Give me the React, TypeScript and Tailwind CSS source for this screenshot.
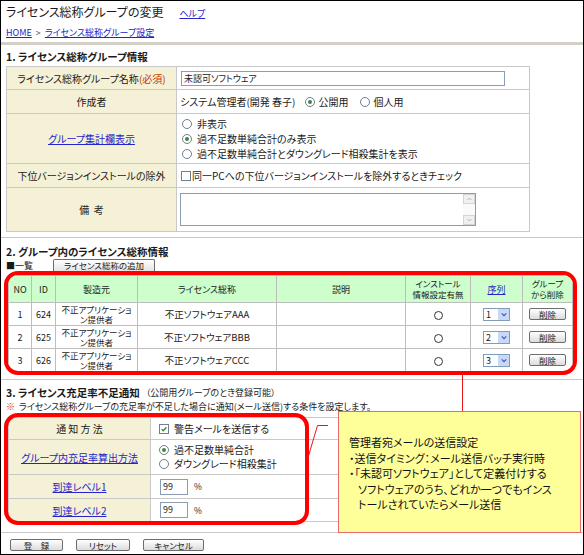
import React from "react";

const Radio = ({ on }: { on?: boolean }) => (
  <span className="inline-flex w-[10px] h-[10px] rounded-full border border-[#6f7f8f] bg-white items-center justify-center shrink-0">
    {on && <span className="w-[4px] h-[4px] rounded-full bg-[#3a8a3a]" />}
  </span>
);

const Check = ({ on }: { on?: boolean }) => (
  <span className="inline-flex w-[10px] h-[10px] border border-[#6f7f8f] bg-white items-center justify-center shrink-0">
    {on && (
      <svg viewBox="0 0 10 10" className="w-[8px] h-[8px]">
        <path d="M2 5.2l2 2 4-4.4" stroke="#2c8a2c" strokeWidth="1.6" fill="none" />
      </svg>
    )}
  </span>
);

const Btn = ({ label, w }: { label: string; w: string }) => (
  <span
    className={`${w} h-[12px] inline-flex items-center justify-center border border-[#6d6d6d] rounded-[2px] bg-gradient-to-b from-white to-[#dcdcdc] text-[8.5px] leading-none`}
  >
    {label}
  </span>
);

const Select = ({ n }: { n: number }) => (
  <span className="inline-flex w-[27px] h-[13px] border border-[#7f9db9] bg-white">
    <span className="flex-1 text-[9px] leading-[11px] pl-[2px] text-left">{n}</span>
    <span className="w-[11px] bg-[#c8d8f6] flex items-center justify-center">
      <svg viewBox="0 0 8 6" className="w-[6px] h-[5px]">
        <path d="M1 1.5l3 3 3-3" stroke="#3557b7" strokeWidth="1.5" fill="none" />
      </svg>
    </span>
  </span>
);

const lbl = "bg-[#f4f1d7] border border-[#c9c9c9] text-center";
const val = "border border-[#c9c9c9] text-left";
const link = "text-[#2424c8] underline";
const th = "font-normal border border-[#bdbdbd]";

const rows = [
  { no: 1, id: 624, name: "不正ソフトウェアAAA" },
  { no: 2, id: 625, name: "不正ソフトウェアBBB" },
  { no: 3, id: 626, name: "不正ソフトウェアCCC" },
];

export default function App() {
  return (
    <div className="w-[584px] h-[555px] border border-black relative overflow-hidden bg-white text-[#1a1a1a] font-['Noto_Sans_CJK_JP',sans-serif] [font-feature-settings:'palt'] text-[10px]">
      {/* title */}
      <div className="h-[22px] flex items-center px-[5px] gap-[16px]">
        <span className="text-[12px] leading-none">ライセンス総称グループの変更</span>
        <a className={`${link} text-[9px] leading-none mt-[2px]`}>ヘルプ</a>
      </div>
      <div className="h-[19px] flex items-center px-[5px] text-[9px] gap-[4px]">
        <a className={link}>HOME</a>
        <span className="text-[#555]">&gt;</span>
        <a className={link}>ライセンス総称グループ設定</a>
      </div>
      <div className="h-[3px] bg-[#d4d0c8]" />

      {/* section 1 */}
      <div className="mt-[3px] h-[17px] flex items-center px-[5px] font-bold text-[10.5px]">
        1. ライセンス総称グループ情報
      </div>
      <table className="mt-[1px] ml-[5px] w-[524px] border-collapse">
        <tbody>
          <tr className="h-[23px]">
            <td className={`${lbl} w-[170px]`}>
              ライセンス総称グループ名称<span className="text-[#cc3300]">(必須)</span>
            </td>
            <td className={`${val} pl-[4px]`}>
              <div className="w-[324px] h-[15px] border border-[#8a9db5] text-[9px] leading-[13px] pl-[2px]">
                未認可ソフトウェア
              </div>
            </td>
          </tr>
          <tr className="h-[24px]">
            <td className={lbl}>作成者</td>
            <td className={`${val} pl-[3px]`}>
              <div className="flex items-center">
                <span>システム管理者(開発 春子)</span>
                <span className="ml-[10px] flex items-center gap-[3px]">
                  <Radio on />
                  公開用
                </span>
                <span className="ml-[12px] flex items-center gap-[3px]">
                  <Radio />
                  個人用
                </span>
              </div>
            </td>
          </tr>
          <tr className="h-[50px]">
            <td className={lbl}>
              <a className={link}>グループ集計欄表示</a>
            </td>
            <td className={`${val} pl-[5px]`}>
              <div className="flex flex-col gap-[2px] leading-[13px]">
                <span className="flex items-center gap-[5px]">
                  <Radio />
                  非表示
                </span>
                <span className="flex items-center gap-[5px]">
                  <Radio on />
                  過不足数単純合計のみ表示
                </span>
                <span className="flex items-center gap-[5px]">
                  <Radio />
                  過不足数単純合計とダウングレード相殺集計を表示
                </span>
              </div>
            </td>
          </tr>
          <tr className="h-[24px]">
            <td className={lbl}>下位バージョンインストールの除外</td>
            <td className={`${val} pl-[4px]`}>
              <span className="flex items-center gap-[1px]">
                <Check />
                同一PCへの下位バージョンインストールを除外するときチェック
              </span>
            </td>
          </tr>
          <tr className="h-[44px]">
            <td className={lbl}>備&nbsp;&nbsp;考</td>
            <td className={`${val} pl-[3px]`}>
              <div className="w-[296px] h-[33px] border border-[#8a9db5] flex justify-end">
                <div className="w-[12px] flex flex-col justify-between bg-[#fafafa]">
                  <span className="h-[10px] border border-[#d4d4d4] bg-[#f0f0f0] flex items-center justify-center">
                    <svg viewBox="0 0 8 6" className="w-[5px] h-[4px]">
                      <path d="M1 4.5l3-3 3 3" stroke="#9a9a9a" strokeWidth="1.2" fill="none" />
                    </svg>
                  </span>
                  <span className="h-[10px] border border-[#d4d4d4] bg-[#f0f0f0] flex items-center justify-center">
                    <svg viewBox="0 0 8 6" className="w-[5px] h-[4px]">
                      <path d="M1 1.5l3 3 3-3" stroke="#9a9a9a" strokeWidth="1.2" fill="none" />
                    </svg>
                  </span>
                </div>
              </div>
            </td>
          </tr>
        </tbody>
      </table>
      <div className="mt-[5px] h-px bg-[#c8c8c8]" />

      {/* section 2 */}
      <div className="mt-[6px] h-[16px] flex items-center px-[5px] font-bold text-[10.5px]">
        2. グループ内のライセンス総称情報
      </div>
      <div className="h-[11px] flex items-end px-[5px] text-[9px]">
        <span className="leading-[10px]">■一覧</span>
        <span className="ml-[20px] w-[102px] h-[12px] border border-[#6d6d6d] border-b-0 rounded-t-[2px] bg-gradient-to-b from-white to-[#e4e4e4] text-[8.5px] leading-[11px] text-center">
          ライセンス総称の追加
        </span>
      </div>
      <div className="ml-[3px] w-[573px] h-[104px] border-[4px] border-[#ff0000] rounded-[14px] overflow-hidden">
        <table className="w-[565px] border-collapse text-[9px] text-center">
          <thead>
            <tr className="h-[27px] bg-[#ccffcc] leading-[11px]">
              <th className={`${th} w-[23px]`}>NO</th>
              <th className={`${th} w-[24px]`}>ID</th>
              <th className={`${th} w-[82px]`}>製造元</th>
              <th className={`${th} w-[139px]`}>ライセンス総称</th>
              <th className={`${th} w-[129px]`}>説明</th>
              <th className={`${th} w-[65px] text-[8.5px]`}>
                インストール
                <br />
                情報設定有無
              </th>
              <th className={`${th} w-[52px]`}>
                <a className={link}>序列</a>
              </th>
              <th className={`${th} text-[8.5px]`}>
                グループ
                <br />
                から削除
              </th>
            </tr>
          </thead>
          <tbody>
            {rows.map((r) => (
              <tr key={r.no} className="h-[23px] leading-[11px]">
                <td className="border border-[#bdbdbd]">{r.no}</td>
                <td className="border border-[#bdbdbd]">{r.id}</td>
                <td className="border border-[#bdbdbd] text-[8.5px] leading-[10.5px]">
                  不正アプリケーショ
                  <br />
                  ン提供者
                </td>
                <td className="border border-[#bdbdbd] text-[9.5px]">{r.name}</td>
                <td className="border border-[#bdbdbd]"></td>
                <td className="border border-[#bdbdbd]">
                  <span className="inline-block w-[9px] h-[9px] rounded-full border border-[#333] align-middle" />
                </td>
                <td className="border border-[#bdbdbd]">
                  <span className="inline-flex align-middle">
                    <Select n={r.no} />
                  </span>
                </td>
                <td className="border border-[#bdbdbd]">
                  <span className="inline-flex align-middle">
                    <Btn label="削除" w="w-[37px]" />
                  </span>
                </td>
              </tr>
            ))}
          </tbody>
        </table>
      </div>
      <div className="mt-[4px] h-px bg-[#c8c8c8]" />

      {/* section 3 */}
      <div className="mt-[6px] h-[14px] flex items-center px-[5px]">
        <span className="font-bold text-[10.5px]">3. ライセンス充足率不足通知</span>
        <span className="ml-[6px] text-[9px]">（公開用グループのとき登録可能）</span>
      </div>
      <div className="h-[13px] flex items-center px-[5px] text-[9px]">
        <span className="text-[#cc3300] mr-[4px]">※</span>
        ライセンス総称グループの充足率が不足した場合に通知(メール送信)する条件を設定します。
      </div>
      <table className="mt-[4px] ml-[7px] w-[523px] border-collapse">
        <tbody>
          <tr className="h-[22px]">
            <td className={`${lbl} w-[142px]`}>通&nbsp;知&nbsp;方&nbsp;法</td>
            <td className={`${val} pl-[8px]`}>
              <span className="flex items-center gap-[5px]">
                <Check on />
                警告メールを送信する
              </span>
            </td>
          </tr>
          <tr className="h-[35px]">
            <td className={lbl}>
              <a className={link}>グループ内充足率算出方法</a>
            </td>
            <td className={`${val} pl-[8px]`}>
              <div className="flex flex-col gap-[2px] leading-[12px]">
                <span className="flex items-center gap-[5px]">
                  <Radio on />
                  過不足数単純合計
                </span>
                <span className="flex items-center gap-[5px]">
                  <Radio />
                  ダウングレード相殺集計
                </span>
              </div>
            </td>
          </tr>
          {["到達レベル1", "到達レベル2"].map((t, i) => (
            <tr key={t} className={i === 0 ? "h-[24px]" : "h-[23px]"}>
              <td className={lbl}>
                <a className={link}>{t}</a>
              </td>
              <td className={`${val} pl-[9px]`}>
                <span className="flex items-center">
                  <span className="w-[28px] h-[16px] border border-[#8a9db5] text-[9px] leading-[14px] pl-[2px]">
                    99
                  </span>
                  <span className="ml-[6px] text-[8.5px]">%</span>
                </span>
              </td>
            </tr>
          ))}
        </tbody>
      </table>
      <div className="mt-[10px] h-px bg-[#c8c8c8]" />
      <div className="mt-[6px] flex gap-[13px] pl-[9px]">
        <Btn label="登　録" w="w-[53px]" />
        <Btn label="リセット" w="w-[54px]" />
        <Btn label="キャンセル" w="w-[61px]" />
      </div>

      {/* annotations */}
      <div className="absolute left-[3px] top-[412px] w-[305px] h-[112px] border-[4px] border-[#ff0000] rounded-[14px] pointer-events-none" />
      <svg className="absolute left-0 top-0 w-[584px] h-[555px] pointer-events-none" viewBox="0 0 584 555">
        <line x1="461.5" y1="373" x2="461.5" y2="411" stroke="#e81818" strokeWidth="1" />
        <polyline points="327,424.5 316.5,424.5 306,460" stroke="#e81818" strokeWidth="1" fill="none" />
      </svg>
      <div className="absolute left-[337px] top-[410px] w-[243px] h-[122px] bg-[#ffff99] border border-[#e86a6a] pl-[10px] pt-[23px] text-[11px] leading-[15.5px] text-[#111]">
        <div>管理者宛メールの送信設定</div>
        <div>・送信タイミング：メール送信バッチ実行時</div>
        <div>・「未認可ソフトウェア」として定義付けする</div>
        <div className="pl-[9px]">ソフトウェアのうち、どれか一つでもインス</div>
        <div className="pl-[9px]">トールされていたらメール送信</div>
      </div>
    </div>
  );
}
